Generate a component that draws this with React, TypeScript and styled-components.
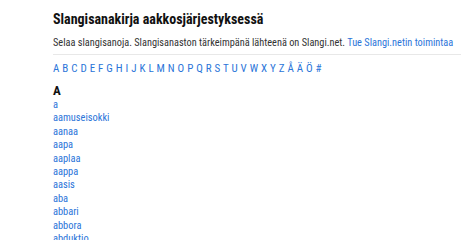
import React from 'react';
import styled, { createGlobalStyle } from 'styled-components';

const GlobalStyle = createGlobalStyle`
  html, body {
    margin: 0;
    padding: 0;
    background: #fff;
    font-family: "Roboto Condensed", "Liberation Sans", Arial, sans-serif;
    color: #222;
  }
`;

const Page = styled.div`
  padding: 11px 6px 0 53px;
`;

const Title = styled.h1`
  margin: 0;
  font-size: 14px;
  line-height: 16px;
  font-weight: bold;
  color: #111;
`;

const Intro = styled.p`
  margin: 9px 0 0;
  font-size: 10.3px;
  line-height: 13px;
  color: #333;
  white-space: nowrap;
  padding-bottom: 5px;
  border-bottom: 1px solid #e8e8e8;
`;

const Link = styled.a`
  color: #2b75d9;
  text-decoration: none;
`;

const Letters = styled.nav`
  margin-top: 7px;
  font-size: 11px;
  line-height: 13px;
  word-spacing: 0.4px;
`;

const Heading = styled.h2`
  margin: 9px 0 0;
  font-size: 13px;
  line-height: 14px;
  font-weight: bold;
  color: #111;
`;

const WordList = styled.ul`
  list-style: none;
  margin: 0;
  padding: 0;
  font-size: 10.4px;
  line-height: 13.4px;
`;

const letters = 'ABCDEFGHIJKLMNOPQRSTUVWXYZÅÄÖ#'.split('');
const words = ['a', 'aamuseisokki', 'aanaa', 'aapa', 'aaplaa', 'aappa', 'aasis', 'aba', 'abbari', 'abbora', 'abduktio'];

const App: React.FC = () => (
  <Page>
    <GlobalStyle />
    <Title>Slangisanakirja aakkosjärjestyksessä</Title>
    <Intro>
      Selaa slangisanoja. Slangisanaston tärkeimpänä lähteenä on Slangi.net.{' '}
      <Link href="#">Tue Slangi.netin toimintaa</Link>
    </Intro>
    <Letters>
      {letters.map((l, i) => (
        <React.Fragment key={l}>
          {i > 0 && ' '}
          <Link href="#">{l}</Link>
        </React.Fragment>
      ))}
    </Letters>
    <Heading>A</Heading>
    <WordList>
      {words.map(w => (
        <li key={w}><Link href="#">{w}</Link></li>
      ))}
    </WordList>
  </Page>
);

export default App;
